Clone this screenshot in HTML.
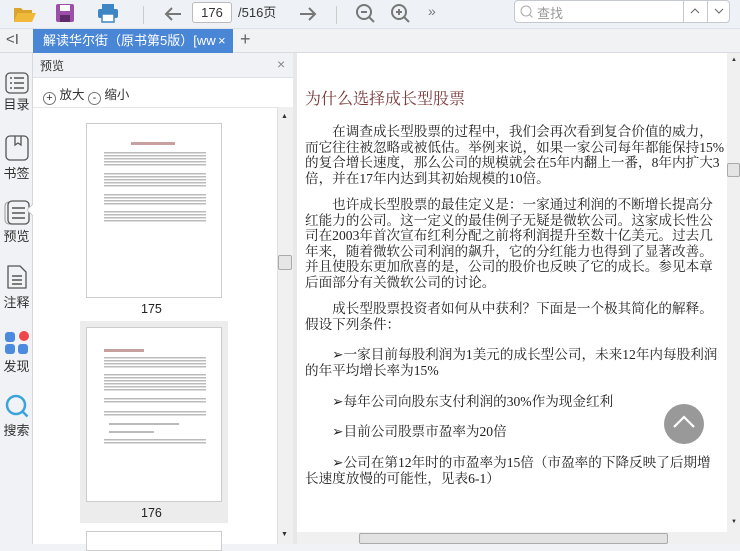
<!DOCTYPE html>
<html><head><meta charset="utf-8"><style>
*{margin:0;padding:0;box-sizing:border-box}
body{width:740px;height:544px;overflow:hidden;position:relative;background:#f0f2f5;font-family:"Liberation Sans","Noto Sans CJK SC",sans-serif;color:#333}
.abs{position:absolute}
#tb{left:0;top:0;width:740px;height:29px;background:#eef2f6;border-bottom:1px solid #dde2e8}
#tabs{left:0;top:29px;width:740px;height:24px;background:#f1f2f4;border-bottom:1px solid #d8dbe0}
#side{left:0;top:53px;width:33px;height:491px;background:#f0f2f5;border-right:1px solid #d5d8dd}
.si{position:absolute;left:0;width:33px;text-align:center;font-size:13px;color:#333}
#prev{left:33px;top:53px;width:260px;height:491px;background:#fff}
#ph{left:0;top:0;width:260px;height:25px;background:#f0f2f5;border-bottom:1px solid #dde0e4;font-size:12px}
#doc{left:293px;top:53px;width:447px;height:491px;background:#e8e8e8}
#page{left:297px;top:53px;width:430px;height:479px;background:#fff}
.t{position:absolute;left:305px;font-family:"Liberation Serif","Noto Serif CJK SC",serif;font-size:13.6px;color:#222;white-space:nowrap;line-height:16px}
.thumb{position:absolute;left:86px;width:136px;background:#fff;border:1px solid #ccc}
</style></head><body>
<div id="tb" class="abs">
 <svg class="abs" style="left:12px;top:4px" width="26" height="20"><path d="M2 4h7l2 2h9v3H6L2 18z" fill="#d9a52e"/><path d="M6 9h18l-4 9H2z" fill="#f0b93a"/></svg>
 <svg class="abs" style="left:55px;top:3px" width="20" height="20"><rect x="1" y="1" width="18" height="18" rx="2" fill="#9b4fa8"/><rect x="5" y="2" width="10" height="6" fill="#fff"/><rect x="5" y="12" width="10" height="7" fill="#5e2a68"/></svg>
 <svg class="abs" style="left:97px;top:3px" width="22" height="20"><rect x="5" y="1" width="12" height="5" fill="#3d86c6"/><rect x="1" y="6" width="20" height="9" rx="2" fill="#3d86c6"/><rect x="5" y="11" width="12" height="8" fill="#fff" stroke="#3d86c6" stroke-width="1.5"/></svg>
 <div class="abs" style="left:143px;top:6px;width:1px;height:18px;background:#ccc"></div>
 <svg class="abs" style="left:163px;top:5px" width="20" height="18"><path d="M18 9H3M9 3L3 9l6 6" stroke="#777" stroke-width="2" fill="none"/></svg>
 <div class="abs" style="left:192px;top:2px;width:40px;height:21px;background:#fff;border:1px solid #bbb;border-radius:3px;font-size:13px;text-align:center;line-height:19px">176</div>
 <div class="abs" style="left:238px;top:4px;font-size:13px;line-height:18px">/516页</div>
 <svg class="abs" style="left:298px;top:5px" width="20" height="18"><path d="M2 9h15M11 3l6 6-6 6" stroke="#777" stroke-width="2" fill="none"/></svg>
 <div class="abs" style="left:336px;top:6px;width:1px;height:18px;background:#ccc"></div>
 <svg class="abs" style="left:355px;top:3px" width="22" height="22"><circle cx="9" cy="9" r="7" stroke="#777" stroke-width="2" fill="none"/><path d="M6 9h6M14 14l5 5" stroke="#777" stroke-width="2"/></svg>
 <svg class="abs" style="left:390px;top:3px" width="22" height="22"><circle cx="9" cy="9" r="7" stroke="#777" stroke-width="2" fill="none"/><path d="M6 9h6M9 6v6M14 14l5 5" stroke="#777" stroke-width="2"/></svg>
 <div class="abs" style="left:428px;top:3px;font-size:14px;color:#777">»</div>
 <div class="abs" style="left:514px;top:0px;width:216px;height:23px;background:#fff;border:1px solid #c5c9ce;border-radius:4px"></div>
 <svg class="abs" style="left:520px;top:5px" width="14" height="14"><circle cx="6" cy="6" r="5" stroke="#aaa" fill="none"/><path d="M9.5 9.5l3 3" stroke="#aaa"/></svg>
 <div class="abs" style="left:537px;top:3px;font-size:13px;color:#999">查找</div>
 <div class="abs" style="left:683px;top:0;width:1px;height:23px;background:#c5c9ce"></div>
 <div class="abs" style="left:707px;top:0;width:1px;height:23px;background:#c5c9ce"></div>
 <svg class="abs" style="left:690px;top:8px" width="10" height="6"><path d="M1 5l4-4 4 4" stroke="#666" fill="none"/></svg>
 <svg class="abs" style="left:714px;top:8px" width="10" height="6"><path d="M1 1l4 4 4-4" stroke="#666" fill="none"/></svg>
</div>
<div id="tabs" class="abs">
 <div class="abs" style="left:6px;top:2px;font-size:15px;color:#555">&lt;I</div>
 <div class="abs" style="left:33px;top:0;width:200px;height:24px;background:#4a86d6;color:#fff;font-size:13px;line-height:24px;padding-left:10px;white-space:nowrap;overflow:hidden">解读华尔街（原书第5版）[www<span style="position:absolute;left:183px;top:0;background:#4a86d6;padding-left:2px">×</span></div>
 <div class="abs" style="left:240px;top:0px;font-size:18px;color:#666">+</div>
</div>
<div id="side" class="abs">
 <div class="si" style="top:19px"><svg width="24" height="22"><rect x="1" y="1" width="22" height="20" rx="4" stroke="#555" stroke-width="1.3" fill="none"/><path d="M5 6h2M9 6h10M5 11h2M9 11h10M5 16h2M9 16h10" stroke="#555" stroke-width="1.5"/></svg><div style="margin-top:-3px">目录</div></div>
 <div class="si" style="top:82px"><svg width="24" height="26"><rect x="1" y="1" width="22" height="24" rx="4" stroke="#555" stroke-width="1.3" fill="none"/><path d="M10 1v9l3-2 3 2V1" stroke="#555" stroke-width="1.3" fill="none"/></svg><div style="margin-top:-1px">书签</div></div>
 <div class="si" style="top:146px"><svg width="26" height="26"><rect x="1" y="3" width="20" height="22" rx="4" stroke="#999" fill="none"/><rect x="4" y="2" width="21" height="23" rx="4" stroke="#555" stroke-width="1.3" fill="#f0f2f5"/><path d="M8 9h13M8 14h13M8 19h13" stroke="#555" stroke-width="1.5"/></svg><div style="margin-top:-2px">预览</div></div>
 <div class="si" style="top:210px"><svg width="24" height="28"><path d="M3 3h12l6 6v16H3z" stroke="#555" stroke-width="1.3" fill="none" stroke-linejoin="round"/><path d="M7 13h10M7 17h10M7 21h10" stroke="#555" stroke-width="1.5"/></svg><div style="margin-top:-2px">注释</div></div>
 <div class="si" style="top:276px"><svg width="26" height="26"><rect x="1" y="3" width="10" height="10" rx="3" fill="#4a8be0"/><circle cx="20" cy="7" r="5" fill="#f04848"/><rect x="1" y="15" width="10" height="10" rx="3" fill="#4a8be0"/><rect x="14" y="15" width="10" height="10" rx="3" fill="#4a8be0"/></svg><div style="margin-top:-2px">发现</div></div>
 <div class="si" style="top:340px"><svg width="26" height="26"><circle cx="12" cy="12" r="9" stroke="#3aa3dc" stroke-width="2.5" fill="none"/><path d="M18.5 18.5l5 5" stroke="#3aa3dc" stroke-width="2.5"/></svg><div style="margin-top:-2px">搜索</div></div>
 <svg class="abs" style="left:27px;top:150px" width="7" height="14"><path d="M7 0L0 7l7 7" fill="#fff" stroke="#ccc"/></svg>
</div>
<div id="prev" class="abs">
 <div id="ph" class="abs"><span class="abs" style="left:7px;top:4px">预览</span><span class="abs" style="left:244px;top:3px;color:#888;font-size:14px">×</span></div>
 <div class="abs" style="left:10px;top:31px;font-size:12.5px;white-space:nowrap"><span style="display:inline-block;width:13px;height:13px;border:1px solid #777;border-radius:50%;text-align:center;line-height:10px;font-size:11px;vertical-align:-2px">+</span> 放大 <span style="display:inline-block;width:13px;height:13px;border:1px solid #777;border-radius:50%;text-align:center;line-height:10px;font-size:11px;vertical-align:-2px">-</span> 缩小</div>
 <div class="abs" style="left:0;top:54px;width:260px;height:1px;background:#e6e6e6"></div>
 <div class="abs" style="left:244px;top:54px;width:16px;height:437px;background:#f0f0f0;border-left:1px solid #e0e0e0"></div>
 <div class="abs" style="left:245px;top:202px;width:14px;height:15px;background:#e6e6e6;border:1px solid #aaa;border-radius:2px"></div>
 <div class="abs" style="left:248px;top:60px;font-size:7px;color:#333">▲</div>
 <div class="abs" style="left:248px;top:478px;font-size:7px;color:#333">▼</div>
</div>
<div class="abs" style="left:80px;top:321px;width:148px;height:202px;background:#ececec"></div>
<div class="thumb" style="top:123px;height:175px">
 <div class="abs" style="left:44px;top:18px;width:44px;height:3px;background:#c9a0a0"></div>
 <div class="abs" style="left:17px;top:28px;width:102px;height:15px;background:repeating-linear-gradient(#bbb 0 1.5px,transparent 1.5px 3px)"></div>
 <div class="abs" style="left:17px;top:49px;width:102px;height:15px;background:repeating-linear-gradient(#bbb 0 1.5px,transparent 1.5px 3px)"></div>
 <div class="abs" style="left:17px;top:70px;width:102px;height:12px;background:repeating-linear-gradient(#bbb 0 1.5px,transparent 1.5px 3px)"></div>
 <div class="abs" style="left:17px;top:87px;width:102px;height:12px;background:repeating-linear-gradient(#bbb 0 1.5px,transparent 1.5px 3px)"></div>
</div>
<div class="abs" style="left:141px;top:302px;font-size:12.5px;color:#222">175</div>
<div class="thumb" style="top:327px;height:175px">
 <div class="abs" style="left:17px;top:21px;width:40px;height:3px;background:#c9a0a0"></div>
 <div class="abs" style="left:17px;top:29px;width:102px;height:12px;background:repeating-linear-gradient(#bbb 0 1.5px,transparent 1.5px 3px)"></div>
 <div class="abs" style="left:17px;top:46px;width:102px;height:18px;background:repeating-linear-gradient(#bbb 0 1.5px,transparent 1.5px 3px)"></div>
 <div class="abs" style="left:17px;top:70px;width:102px;height:6px;background:repeating-linear-gradient(#bbb 0 1.5px,transparent 1.5px 3px)"></div>
 <div class="abs" style="left:17px;top:83px;width:102px;height:6px;background:repeating-linear-gradient(#bbb 0 1.5px,transparent 1.5px 3px)"></div>
 <div class="abs" style="left:22px;top:95px;width:70px;height:2px;background:#bbb"></div>
 <div class="abs" style="left:22px;top:103px;width:45px;height:2px;background:#bbb"></div>
 <div class="abs" style="left:17px;top:111px;width:102px;height:6px;background:repeating-linear-gradient(#bbb 0 1.5px,transparent 1.5px 3px)"></div>
</div>
<div class="abs" style="left:141px;top:506px;font-size:12.5px;color:#222">176</div>
<div class="thumb" style="top:531px;height:20px"></div>

<div id="doc" class="abs"></div>
<div id="page" class="abs"></div>
<div class="abs" style="left:727px;top:53px;width:13px;height:479px;background:#f0f0f0"></div>
<div class="abs" style="left:727px;top:163px;width:13px;height:14px;background:#e4e4e4;border:1px solid #aaa;border-radius:2px"></div>
<div class="abs" style="left:731px;top:57px;font-size:6px">▲</div>
<div class="abs" style="left:731px;top:519px;font-size:6px">▼</div>
<div class="abs" style="left:297px;top:532px;width:443px;height:12px;background:#f0f0f0"></div>
<div class="abs" style="left:359px;top:533px;width:309px;height:11px;background:#e2e2e2;border:1px solid #aaa;border-radius:2px"></div>

<div class="t" style="top:92px;font-size:16px;color:#7a3b3b">为什么选择成长型股票</div>
<div class="t" style="top:124px">　　在调查成长型股票的过程中，我们会再次看到复合价值的威力，</div>
<div class="t" style="top:139.5px">而它往往被忽略或被低估。举例来说，如果一家公司每年都能保持15%</div>
<div class="t" style="top:155px">的复合增长速度，那么公司的规模就会在5年内翻上一番，8年内扩大3</div>
<div class="t" style="top:170.5px">倍，并在17年内达到其初始规模的10倍。</div>
<div class="t" style="top:197px">　　也许成长型股票的最佳定义是：一家通过利润的不断增长提高分</div>
<div class="t" style="top:212.5px">红能力的公司。这一定义的最佳例子无疑是微软公司。这家成长性公</div>
<div class="t" style="top:228px">司在2003年首次宣布红利分配之前将利润提升至数十亿美元。过去几</div>
<div class="t" style="top:243.5px">年来，随着微软公司利润的飙升，它的分红能力也得到了显著改善。</div>
<div class="t" style="top:259px">并且使股东更加欣喜的是，公司的股价也反映了它的成长。参见本章</div>
<div class="t" style="top:274.5px">后面部分有关微软公司的讨论。</div>
<div class="t" style="top:301px">　　成长型股票投资者如何从中获利？下面是一个极其简化的解释。</div>
<div class="t" style="top:316.5px">假设下列条件：</div>
<div class="t" style="top:347px">　　➢一家目前每股利润为1美元的成长型公司，未来12年内每股利润</div>
<div class="t" style="top:362.5px">的年平均增长率为15%</div>
<div class="t" style="top:393.5px">　　➢每年公司向股东支付利润的30%作为现金红利</div>
<div class="t" style="top:424px">　　➢目前公司股票市盈率为20倍</div>
<div class="t" style="top:455px">　　➢公司在第12年时的市盈率为15倍（市盈率的下降反映了后期增</div>
<div class="t" style="top:470.5px">长速度放慢的可能性，见表6-1）</div>

<div class="abs" style="left:664px;top:404px;width:40px;height:40px;border-radius:50%;background:#999"></div>
<svg class="abs" style="left:672px;top:414px" width="24" height="16"><path d="M2 13L12 3l10 10" stroke="#fff" stroke-width="2.2" fill="none"/></svg>
</body></html>
